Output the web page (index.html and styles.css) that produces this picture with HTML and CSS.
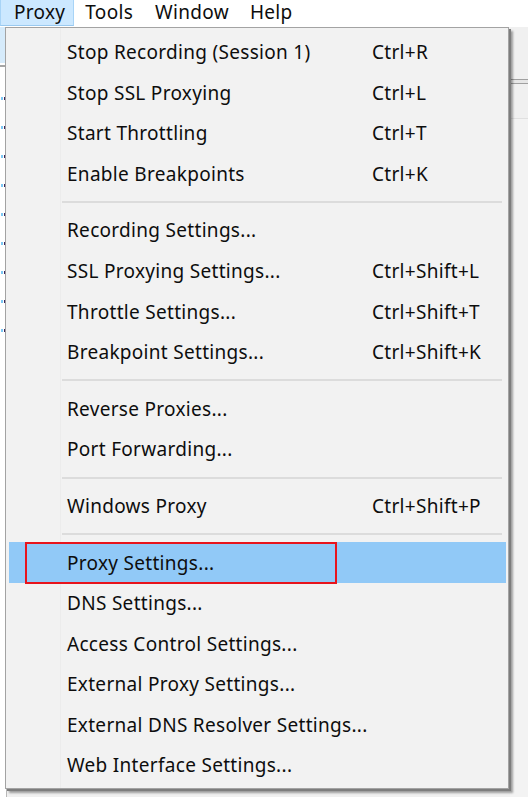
FILE: index.html
```html
<!DOCTYPE html>
<html>
<head>
<meta charset="utf-8">
<link rel="stylesheet" href="styles.css">
</head>
<body>
<div class="window">
  <div class="menubar">
    <div class="mb-item active">Proxy</div>
    <div class="mb-item">Tools</div>
    <div class="mb-item">Window</div>
    <div class="mb-item">Help</div>
  </div>
  <div class="workspace">
    <div class="left-pane">
      <div class="lp-head"></div>
      <div class="lp-rule"></div>
      <div class="lp-list">
        <span class="dot"></span><span class="dot"></span><span class="dot"></span><span class="dot"></span><span class="dot"></span><span class="dot"></span><span class="dot"></span><span class="dot"></span><span class="dot"></span>
      </div>
    </div>
    <div class="center"></div>
    <div class="right-pane">
      <div class="rp-top"></div>
      <div class="rp-rule"></div>
      <div class="rp-body"></div>
    </div>
  </div>

  <div class="dropdown">
    <div class="gutter-line"></div>
    <div class="menu">
      <div class="row"><span class="label">Stop Recording (Session 1)</span><span class="key">Ctrl+R</span></div>
      <div class="row"><span class="label">Stop SSL Proxying</span><span class="key">Ctrl+L</span></div>
      <div class="row"><span class="label">Start Throttling</span><span class="key">Ctrl+T</span></div>
      <div class="row"><span class="label">Enable Breakpoints</span><span class="key">Ctrl+K</span></div>
      <div class="sep"></div>
      <div class="row"><span class="label">Recording Settings...</span><span class="key"></span></div>
      <div class="row"><span class="label">SSL Proxying Settings...</span><span class="key">Ctrl+Shift+L</span></div>
      <div class="row"><span class="label">Throttle Settings...</span><span class="key">Ctrl+Shift+T</span></div>
      <div class="row"><span class="label">Breakpoint Settings...</span><span class="key">Ctrl+Shift+K</span></div>
      <div class="sep"></div>
      <div class="row"><span class="label">Reverse Proxies...</span><span class="key"></span></div>
      <div class="row"><span class="label">Port Forwarding...</span><span class="key"></span></div>
      <div class="sep"></div>
      <div class="row"><span class="label">Windows Proxy</span><span class="key">Ctrl+Shift+P</span></div>
      <div class="sep"></div>
      <div class="row selected"><span class="label">Proxy Settings...</span><span class="key"></span></div>
      <div class="row"><span class="label">DNS Settings...</span><span class="key"></span></div>
      <div class="row"><span class="label">Access Control Settings...</span><span class="key"></span></div>
      <div class="row"><span class="label">External Proxy Settings...</span><span class="key"></span></div>
      <div class="row"><span class="label">External DNS Resolver Settings...</span><span class="key"></span></div>
      <div class="row"><span class="label">Web Interface Settings...</span><span class="key"></span></div>
    </div>
  </div>

  <div class="annotation"></div>
</div>
</body>
</html>
```

FILE: styles.css
```css
html, body {
  margin: 0;
  padding: 0;
  background: #ffffff;
}

.window {
  position: relative;
  width: 528px;
  height: 797px;
  overflow: hidden;
  font-family: "Noto Sans", "Open Sans", "DejaVu Sans", sans-serif;
  color: #0d0d0d;
  background: #ffffff;
  display: flex;
  flex-direction: column;
}

/* top menu bar */
.menubar {
  height: 27px;
  display: flex;
  align-items: stretch;
  background: #ffffff;
  font-size: 19px;
  letter-spacing: 0.3px;
  line-height: 24px;
  flex: none;
}

.mb-item {
  padding: 0 10px;
  height: 25px;
  border: 1px solid transparent;
  border-top: none;
}

.mb-item:first-child {
  padding-left: 13px;
  padding-right: 8px;
}

.mb-item:last-child {
  padding-left: 9px;
}

.mb-item.active {
  background: #cce8ff;
  border-color: #a8d4f7;
  border-bottom-color: #99c9f0;
}

/* background application area */
.workspace {
  flex: 1;
  display: flex;
  min-height: 0;
}

.left-pane {
  width: 6px;
  display: flex;
  flex-direction: column;
  border-right: 1px solid #b8b8b8;
  background: #ffffff;
}

.lp-head {
  height: 36px;
  background: #d6ebfb;
}

.lp-rule {
  height: 2px;
  background: #a5a5a5;
  margin-top: 2px;
}

.lp-list {
  display: flex;
  flex-direction: column;
  align-items: flex-end;
  gap: 26px;
  padding-top: 30px;
}

.dot {
  width: 2px;
  height: 3px;
  background: #3a2458;
  box-shadow: -3px 0 0 #7cc8f4;
}

.center {
  flex: 1;
  background: #f0f0f0;
}

.right-pane {
  width: 18px;
  display: flex;
  flex-direction: column;
  background: #f3f3f3;
}

.rp-top {
  height: 52px;
  background: #f0f0f0;
}

.rp-rule {
  height: 3px;
  border-top: 1px solid #a0a0a0;
  border-bottom: 1px solid #a0a0a0;
  background: #e6e6e6;
}

.rp-body {
  height: 34px;
  background: #f0f0f0;
  border-bottom: 1px solid #e0e0e0;
}

/* dropdown menu (popup over the window) */
.dropdown {
  position: absolute;
  left: 5px;
  top: 27px;
  width: 502px;
  height: 760px;
  background: #f2f2f2;
  border: 1px solid #a3a3a3;
  box-shadow: 2px 2px 0 #7d7d7d, 4px 4px 2px rgba(0, 0, 0, 0.35);
}

.gutter-line {
  position: absolute;
  left: 54px;
  top: 0;
  bottom: 0;
  width: 1px;
  background: #ececec;
}

.menu {
  position: relative;
  padding-top: 3.7px;
  display: flex;
  flex-direction: column;
  font-size: 19px;
  letter-spacing: 0.3px;
}

.row {
  height: 40.6px;
  display: flex;
  align-items: center;
  margin-left: 3px;
  margin-right: 2px;
  padding-left: 58px;
}

.row .label {
  width: 305px;
  white-space: nowrap;
}

.row .key {
  white-space: nowrap;
}

.row.selected {
  background: #91c9f7;
}

.sep {
  height: 16px;
  display: flex;
  align-items: center;
  margin-left: 56px;
  margin-right: 6px;
}

.sep::before {
  content: "";
  flex: 1;
  height: 2px;
  background: #dcdcdc;
}

/* red annotation rectangle drawn over the screenshot */
.annotation {
  position: absolute;
  left: 25px;
  top: 542px;
  width: 308px;
  height: 38px;
  border: 2px solid #e8141c;
}
```
